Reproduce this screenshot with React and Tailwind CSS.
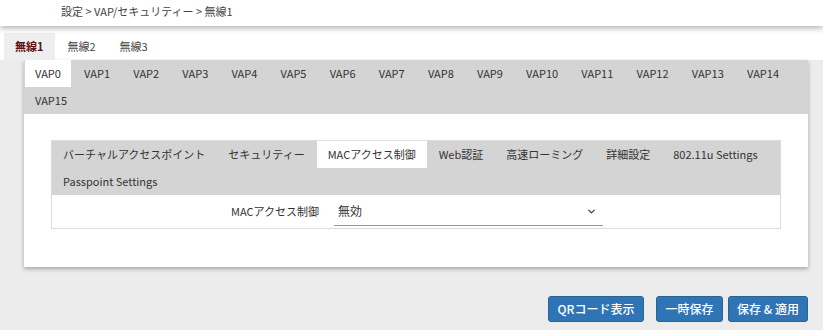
import { ChevronDown } from "lucide-react";

const vaps = Array.from({ length: 16 }, (_, i) => `VAP${i}`);
const subTabs = [
  "バーチャルアクセスポイント",
  "セキュリティー",
  "MACアクセス制御",
  "Web認証",
  "高速ローミング",
  "詳細設定",
  "802.11u Settings",
  "Passpoint Settings",
];

function App() {
  return (
    <div
      className="h-[330px] w-[823px] overflow-hidden bg-[#ececec] text-[#333]"
      style={{ fontFamily: '"Noto Sans CJK JP", "Noto Sans", sans-serif' }}
    >
      <div className="bg-white">
        <div className="relative z-10 h-[26px] bg-white pl-[61px] text-[11px] leading-[22px] text-[#444] shadow-[0_2px_6px_rgba(0,0,0,0.32)]">
          設定 &gt; VAP/セキュリティー &gt; 無線1
        </div>
        <div className="flex pl-[4px] pt-[7px] text-[11px]">
          <div className="mr-[2px] flex h-[27px] items-center bg-[#eeeeee] px-[11px] font-bold text-[#5c1010]">無線1</div>
          <div className="mr-[2px] flex h-[27px] items-center px-[11px] text-[#444]">無線2</div>
          <div className="mr-[2px] flex h-[27px] items-center px-[11px] text-[#444]">無線3</div>
        </div>
      </div>

      <div className="ml-[24px] w-[784px] bg-white shadow-[0_2px_4px_rgba(0,0,0,0.3)]">
        <div className="flex flex-wrap bg-[#d4d4d4] pl-px text-[11px]">
          {vaps.map((v, i) => (
            <div
              key={v}
              className={`mr-[3.2px] flex h-[27px] items-center px-[10px] ${i === 0 ? "bg-white" : ""}`}
            >
              {v}
            </div>
          ))}
          <div className="h-[27px] w-[600px]" />
        </div>

        <div className="px-[27px] pb-[38px] pt-[26px]">
          <div className="border border-[#dddddd]">
            <div className="flex flex-wrap bg-[#d4d4d4] text-[11px]">
              {subTabs.map((t, i) => (
                <div
                  key={t}
                  className={`mr-[1px] flex h-[27px] items-center px-[11px] ${i === 2 ? "bg-white" : ""}`}
                >
                  {t}
                </div>
              ))}
              <div className="h-[27px] w-[600px]" />
            </div>
            <div className="flex h-[33px] items-center text-[11px]">
              <div className="w-[267px] text-right">MACアクセス制御</div>
              <div className="ml-[15px] flex h-[28px] w-[269px] items-center justify-between border-b border-[#999] pl-[4px] pr-[6px]">
                <span className="text-[12px]">無効</span>
                <ChevronDown size={11} strokeWidth={2.5} />
              </div>
            </div>
          </div>
        </div>
      </div>

      <div className="mr-[15px] mt-[29px] flex justify-end gap-[5px] text-[12px] font-medium text-white">
        <button className="mr-[7px] h-[26px] w-[96px] rounded-[3px] border border-[#2a6496] bg-[#2f75b5]">QRコード表示</button>
        <button className="h-[26px] w-[67px] rounded-[3px] border border-[#2a6496] bg-[#2f75b5]">一時保存</button>
        <button className="h-[26px] w-[80px] rounded-[3px] border border-[#2a6496] bg-[#2f75b5]">保存 &amp; 適用</button>
      </div>
    </div>
  );
}

export default App;
